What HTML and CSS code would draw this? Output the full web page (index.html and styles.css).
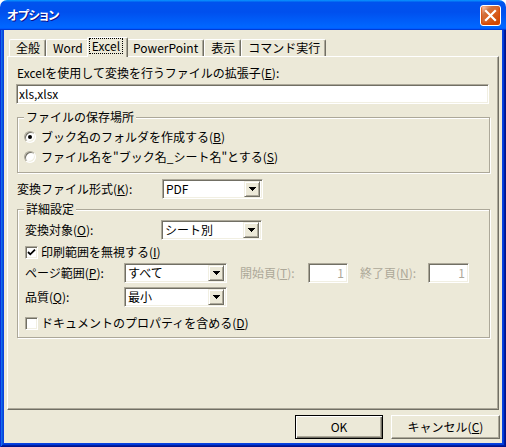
FILE: index.html
```html
<!DOCTYPE html>
<html lang="ja">
<head>
<meta charset="utf-8">
<title>オプション</title>
<link rel="stylesheet" href="styles.css">
</head>
<body>
<div class="window">
  <div class="titlebar">
    <span class="title">オプション</span>
    <span class="close">
      <svg width="19" height="19" viewBox="0 0 19 19"><path d="M5 5 L14 14 M14 5 L5 14" stroke="#fff" stroke-width="2.2" stroke-linecap="square"/></svg>
    </span>
  </div>
  <div class="frame">
    <div class="client">
      <div class="tabs">
        <div class="tab">全般</div>
        <div class="tab">Word</div>
        <div class="tab selected"><span class="focus">Excel</span></div>
        <div class="tab">PowerPoint</div>
        <div class="tab">表示</div>
        <div class="tab">コマンド実行</div>
      </div>
      <div class="panel">
        <div class="text">Excelを使用して変換を行うファイルの拡張子(<u>E</u>):</div>
        <div class="edit wide">xls,xlsx</div>

        <fieldset class="group g1">
          <legend>ファイルの保存場所</legend>
          <div class="opt"><span class="radio checked"></span><span>ブック名のフォルダを作成する(<u>B</u>)</span></div>
          <div class="opt"><span class="radio"></span><span>ファイル名を"ブック名_シート名"とする(<u>S</u>)</span></div>
        </fieldset>

        <div class="field format">
          <span class="lbl lbl-format">変換ファイル形式(<u>K</u>):</span>
          <div class="combo c101"><span class="val">PDF</span><span class="arrow"><svg width="7" height="4" viewBox="0 0 7 4"><path d="M0 0h7v1H0z M1 1h5v1H1z M2 2h3v1H2z M3 3h1v1H3z" fill="#000"/></svg></span></div>
        </div>

        <fieldset class="group g2">
          <legend>詳細設定</legend>
          <div class="field">
            <span class="lbl lbl-target">変換対象(<u>O</u>):</span>
            <div class="combo c101"><span class="val">シート別</span><span class="arrow"><svg width="7" height="4" viewBox="0 0 7 4"><path d="M0 0h7v1H0z M1 1h5v1H1z M2 2h3v1H2z M3 3h1v1H3z" fill="#000"/></svg></span></div>
          </div>
          <div class="opt chk-row1"><span class="check"><svg width="9" height="9" viewBox="0 0 9 9"><path d="M1 4 L3.3 6.3 L8 1.6" fill="none" stroke="#000" stroke-width="1.8"/></svg></span><span>印刷範囲を無視する(<u>I</u>)</span></div>
          <div class="field pages">
            <span class="lbl lbl-short">ページ範囲(<u>P</u>):</span>
            <div class="combo c103"><span class="val">すべて</span><span class="arrow"><svg width="7" height="4" viewBox="0 0 7 4"><path d="M0 0h7v1H0z M1 1h5v1H1z M2 2h3v1H2z M3 3h1v1H3z" fill="#000"/></svg></span></div>
            <span class="lbl disabled lbl-page first">開始頁(<u>T</u>):</span>
            <div class="edit num">1</div>
            <span class="lbl disabled lbl-page second">終了頁(<u>N</u>):</span>
            <div class="edit num n41">1</div>
          </div>
          <div class="field quality">
            <span class="lbl lbl-short">品質(<u>Q</u>):</span>
            <div class="combo c103"><span class="val">最小</span><span class="arrow"><svg width="7" height="4" viewBox="0 0 7 4"><path d="M0 0h7v1H0z M1 1h5v1H1z M2 2h3v1H2z M3 3h1v1H3z" fill="#000"/></svg></span></div>
          </div>
          <div class="opt chk-row2"><span class="check"></span><span>ドキュメントのプロパティを含める(<u>D</u>)</span></div>
        </fieldset>
      </div>
      <div class="buttons">
        <button class="btn default ok">OK</button>
        <button class="btn cancel">キャンセル(<u>C</u>)</button>
      </div>
    </div>
  </div>
</div>
</body>
</html>
```
FILE: styles.css
```css
* { box-sizing: border-box; }
html, body { margin: 0; padding: 0; }
body {
  width: 506px;
  height: 447px;
  overflow: hidden;
  background: #ffffff;
  font-family: "Noto Sans CJK JP", sans-serif;
  font-size: 12px;
  color: #000;
}
u { text-decoration: underline; text-underline-offset: 1px; text-decoration-thickness: 1px; }

.window {
  width: 506px;
  height: 447px;
  display: flex;
  flex-direction: column;
}

.titlebar {
  height: 30px;
  flex: none;
  display: flex;
  align-items: center;
  justify-content: space-between;
  padding: 0 5px 0 7px;
  border-radius: 7px 7px 0 0;
  background: linear-gradient(180deg, #0997ff, #0053ee 8%, #0050ee 40%, #0066ff 88%, #0066ff 93%, #005bff 95%, #003dd7 96%, #003dd7);
}
.title {
  color: #fff;
  font-weight: bold;
  font-size: 12px;
  font-feature-settings: "palt";
  letter-spacing: -0.5px;
  text-shadow: 1px 1px #0f1089;
  line-height: 16px;
}
.close {
  width: 21px;
  height: 21px;
  display: flex;
  align-items: center;
  justify-content: center;
  border: 1px solid #fff;
  border-radius: 3px;
  background: radial-gradient(circle at 90% 90%, #cc4600 0%, #dc6527 55%, #cd7546 70%, #ffccb2 90%, #fff 100%);
  box-shadow: inset 0 -1px 2px 1px #da4600;
}

.frame {
  flex: 1;
  display: flex;
  padding: 0 4px 4px;
  background: #0842df;
  box-shadow: inset 1px 0 #0831d9, inset -1px -1px #00138c, inset 2px 0 #166aee, inset -2px -2px #001ea0, inset 3px 0 #0855dd, inset -3px -3px #003bda;
}

.client {
  flex: 1;
  display: flex;
  flex-direction: column;
  background: #ece9d8;
  padding: 7px 3px 0;
}

/* Tabs */
.tabs {
  height: 19px;
  flex: none;
  display: flex;
  align-items: flex-end;
  padding-left: 2px;
  position: relative;
  z-index: 2;
}
.tab {
  height: 17px;
  padding: 0 5px 0 6px;
  line-height: 15px;
  white-space: nowrap;
  background: #ece9d8;
  border-top: 1px solid #fff;
  border-left: 1px solid #fff;
  border-right: 1px solid #716f64;
  box-shadow: inset -1px 0 #aca899;
  border-radius: 2px 2px 0 0;
}
.tab.selected {
  height: 20px;
  margin: 0 -2px -1px;
  padding: 1px 5px 0 2px;
  line-height: 13px;
  position: relative;
  z-index: 3;
}
.focus {
  display: inline-block;
  outline: 1px dotted #000;
  outline-offset: 0;
  padding: 0 2px 1px 2px;
  line-height: 13px;
}

/* Panel */
.panel {
  flex: 1;
  display: flex;
  flex-direction: column;
  border: 1px solid;
  border-color: #fff #716f64 #716f64 #fff;
  box-shadow: inset -1px -1px #aca899;
  padding: 9px 8px 0 8px;
}
.text { line-height: 14px; padding-left: 1px; white-space: nowrap; }

.edit {
  height: 20px;
  background: #fff;
  border: 1px solid;
  border-color: #aca899 #fff #fff #aca899;
  box-shadow: inset 1px 1px #716f64, inset -1px -1px #f1efe2;
  padding: 0 3px 0 2px;
  line-height: 17px;
  white-space: nowrap;
}
.edit.wide { margin-top: 4px; margin-right: 1px; }
.edit.num { width: 40px; text-align: right; color: #aca899; }
.edit.num.n41 { width: 41px; }

/* Groups */
.group {
  margin: 6px 0 0 1px;
  padding: 3px 6px 5px;
  border: 1px solid #aca899;
  box-shadow: inset 1px 1px #fff, 1px 1px #fff;
  min-width: 0;
}
.group legend {
  padding: 0 2px;
  margin-left: 0;
  line-height: 14px;
  background: #ece9d8;
}
.group.g2 { margin-top: 3px; padding-top: 4px; padding-bottom: 4px; }

.opt {
  height: 20px;
  display: flex;
  align-items: center;
  white-space: nowrap;
  line-height: 14px;
}
.radio {
  width: 12px;
  height: 12px;
  margin-right: 5px;
  border-radius: 50%;
  background: #fff;
  border: 1px solid;
  border-color: #aca899 #fff #fff #aca899;
  box-shadow: inset 1px 1px #716f64, inset -1px -1px #f1efe2;
  display: flex;
  align-items: center;
  justify-content: center;
}
.radio.checked::after {
  content: "";
  width: 4px;
  height: 4px;
  border-radius: 50%;
  background: #000;
}
.check {
  width: 13px;
  height: 13px;
  margin: 0 3px 0 1px;
  background: #fff;
  border: 1px solid;
  border-color: #aca899 #fff #fff #aca899;
  box-shadow: inset 1px 1px #716f64, inset -1px -1px #f1efe2;
  display: flex;
  align-items: center;
  justify-content: center;
}
.chk-row1 { margin-top: 2px; }
.chk-row2 { margin-top: 6px; }

.field {
  height: 20px;
  display: flex;
  align-items: center;
  white-space: nowrap;
}
.field.format { margin-top: 6px; }
.field.pages { margin-top: 1px; }
.field.quality { margin-top: 4px; }
.lbl { line-height: 14px; padding-left: 1px; flex: none; }
.lbl-format { width: 146px; }
.lbl-target { width: 137px; }
.lbl-short { width: 100px; }
.lbl-page { width: 69px; }
.lbl-page.first { margin-left: 12px; }
.lbl-page.second { margin-left: 11px; }
.disabled { color: #aca899; }

.combo {
  height: 20px;
  flex: none;
  display: flex;
  align-items: center;
  background: #fff;
  border: 1px solid;
  border-color: #aca899 #fff #fff #aca899;
  box-shadow: inset 1px 1px #716f64, inset -1px -1px #f1efe2;
  padding: 2px;
}
.combo.c101 { width: 101px; }
.combo.c103 { width: 103px; }
.combo .val { flex: 1; line-height: 14px; padding-left: 1px; }
.arrow {
  width: 16px;
  height: 16px;
  display: flex;
  align-items: center;
  justify-content: center;
  background: #ece9d8;
  border: 1px solid;
  border-color: #f1efe2 #716f64 #716f64 #f1efe2;
  box-shadow: inset 1px 1px #fff, inset -1px -1px #aca899;
}

/* Buttons */
.buttons {
  height: 33px;
  flex: none;
  display: flex;
  justify-content: flex-end;
  gap: 8px;
  padding-top: 5px;
  margin-right: -1px;
}
.btn {
  height: 24px;
  font-family: "Noto Sans CJK JP", sans-serif;
  font-size: 12px;
  color: #000;
  background: #ece9d8;
  border: 1px solid;
  border-color: #fff #716f64 #716f64 #fff;
  box-shadow: inset -1px -1px #aca899;
  padding: 0;
  line-height: 14px;
}
.btn.default {
  border: 1px solid #000;
  box-shadow: inset 1px 1px #fff, inset -1px -1px #716f64, inset -2px -2px #aca899;
}
.btn.ok { width: 88px; }
.btn.cancel { width: 109px; }
```
